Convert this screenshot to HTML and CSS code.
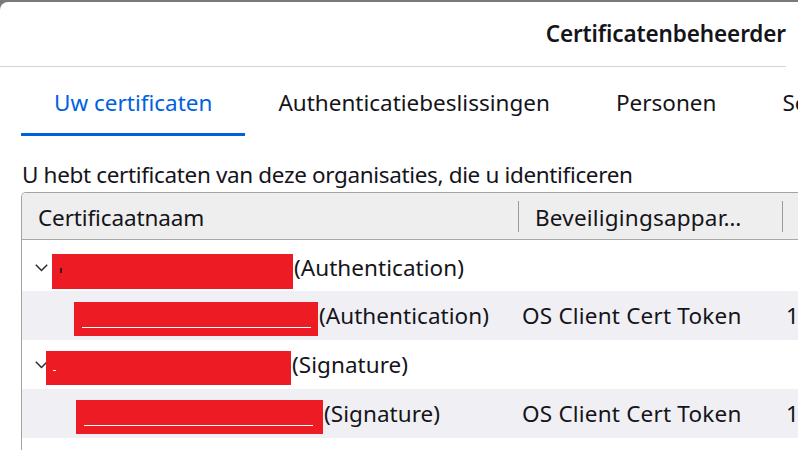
FILE: index.html
```html
<!DOCTYPE html>
<html lang="nl">
<head>
<meta charset="utf-8">
<title>Certificatenbeheerder</title>
<link rel="stylesheet" href="styles.css">
</head>
<body>
<div class="dialog">
  <header class="titlebar">
    <h1 class="title">Certificatenbeheerder</h1>
  </header>
  <nav class="tabs">
    <div class="tab tab-active">Uw certificaten</div>
    <div class="tab">Authenticatiebeslissingen</div>
    <div class="tab">Personen</div>
    <div class="tab">Servers</div>
    <div class="tab">Organisaties</div>
  </nav>
  <p class="intro">U hebt certificaten van deze organisaties, die u identificeren</p>
  <div class="tree">
    <div class="tree-head">
      <div class="th"><span class="th-label th-name">Certificaatnaam</span><span class="sep"></span></div>
      <div class="th"><span class="th-label th-device">Beveiligingsappar…</span><span class="sep"></span></div>
      <div class="th"><span class="th-label">Serienummer</span></div>
    </div>
    <div class="tree-row row-first">
      <div class="td td-name">
        <svg class="twisty" width="13" height="8" viewBox="0 0 13 8"><polyline points="0.8,0.8 6.5,6.5 12.2,0.8" fill="none" stroke="#2b2a33" stroke-width="1.5"/></svg>
        <span class="redact redact-1"><span class="mark mark-dark"></span></span><span class="name-text">(Authentication)</span>
      </div>
      <div class="td"></div>
      <div class="td"></div>
    </div>
    <div class="tree-row row-odd">
      <div class="td td-name td-child">
        <span class="redact redact-2"><span class="mark mark-line"></span></span><span class="name-text">(Authentication)</span>
      </div>
      <div class="td td-cell">OS Client Cert Token</div>
      <div class="td td-cell">1</div>
    </div>
    <div class="tree-row">
      <div class="td td-name">
        <svg class="twisty" width="13" height="8" viewBox="0 0 13 8"><polyline points="0.8,0.8 6.5,6.5 12.2,0.8" fill="none" stroke="#2b2a33" stroke-width="1.5"/></svg>
        <span class="redact redact-3"><span class="mark mark-dash"></span></span><span class="name-text">(Signature)</span>
      </div>
      <div class="td"></div>
      <div class="td"></div>
    </div>
    <div class="tree-row row-odd">
      <div class="td td-name td-child">
        <span class="redact redact-4"><span class="mark mark-line"></span></span><span class="name-text">(Signature)</span>
      </div>
      <div class="td td-cell">OS Client Cert Token</div>
      <div class="td td-cell">1</div>
    </div>
  </div>
</div>
</body>
</html>
```

FILE: styles.css
```css
html, body {
  margin: 0;
  padding: 0;
}
body {
  background: #7a7a7a;
  width: 798px;
  height: 450px;
  overflow: hidden;
  font-family: "Noto Sans", "DejaVu Sans", sans-serif;
  color: #15141a;
}
.dialog {
  margin-top: 2px;
  width: 1100px;
  height: 448px;
  background: #ffffff;
  border-top-left-radius: 8px;
  overflow: hidden;
}
.titlebar {
  height: 64px;
  border-bottom: 1px solid #d4d4d4;
  display: flex;
  align-items: center;
  width: 786px;
  justify-content: flex-end;
}
.title {
  margin: 0;
  font-size: 22.5px;
  font-weight: 600;
  line-height: 30px;
  letter-spacing: -0.12px;
}
.tabs {
  display: flex;
  padding-left: 21px;
  white-space: nowrap;
}
.tab {
  flex-shrink: 0;
  padding: 21px 33px 15px;
  font-size: 22.5px;
  line-height: 30px;
  border-bottom: 3px solid transparent;
  letter-spacing: 0;
}
.tab-active {
  color: #0061e0;
  border-bottom-color: #0061e0;
}
.intro {
  margin: 24px 0 2px 22px;
  font-size: 22.5px;
  line-height: 30px;
  letter-spacing: -0.35px;
  white-space: nowrap;
}
.tree {
  margin-left: 21px;
  width: 1000px;
  height: 260px;
  border-left: 1px solid #a3a3a3;
  border-top: 1px solid #a3a3a3;
  border-top-left-radius: 5px;
  overflow: hidden;
}
.tree-head, .tree-row {
  display: grid;
  grid-template-columns: 497px 264px 1fr;
}
.tree-head {
  height: 46px;
  background: #eeeeee;
  border-bottom: 1px solid #a9a9a9;
}
.th {
  display: flex;
  align-items: center;
  font-size: 22.5px;
  line-height: 30px;
  white-space: nowrap;
  overflow: hidden;
}
.th-label {
  padding-left: 16px;
  margin-top: 4px;
}
.th-name {
  letter-spacing: -0.13px;
}
.th-device {
  letter-spacing: 0.2px;
}
.sep {
  margin-left: auto;
  width: 1px;
  height: 31px;
  background: #9a9a9a;
}
.tree-row {
  height: 49px;
}
.row-first {
  height: 46px;
  padding-top: 5px;
}
.row-odd {
  background: #f0f0f4;
}
.td {
  display: flex;
  align-items: center;
  font-size: 22.5px;
  line-height: 30px;
  white-space: nowrap;
  overflow: hidden;
}
.td-name {
  padding-left: 13px;
}
.td-child {
  padding-left: 0;
}
.td-cell {
  padding-left: 3px;
  letter-spacing: 0.2px;
}
.twisty {
  flex-shrink: 0;
  display: block;
}
.redact {
  position: relative;
  display: block;
  flex-shrink: 0;
  background: #ed1c24;
  margin-top: 6px;
}
.redact-1 { width: 241px; height: 35px; margin-left: 4px; }
.redact-2 { width: 244px; height: 34px; margin-left: 52px; }
.redact-3 { width: 245px; height: 34px; margin-left: -2px; }
.redact-4 { width: 247px; height: 34px; margin-left: 54px; }
.mark {
  position: absolute;
}
.mark-dark {
  left: 8px;
  top: 14px;
  width: 2px;
  height: 5px;
  background: #3a1a1a;
}
.mark-dash {
  left: 7px;
  top: 19px;
  width: 3px;
  height: 1px;
  background: #ffffff;
}
.mark-line {
  left: 8px;
  top: 25px;
  width: 229px;
  height: 1px;
  background: #ffffff;
}
.name-text {
  margin-left: 1px;
  letter-spacing: 0.05px;
}
```
